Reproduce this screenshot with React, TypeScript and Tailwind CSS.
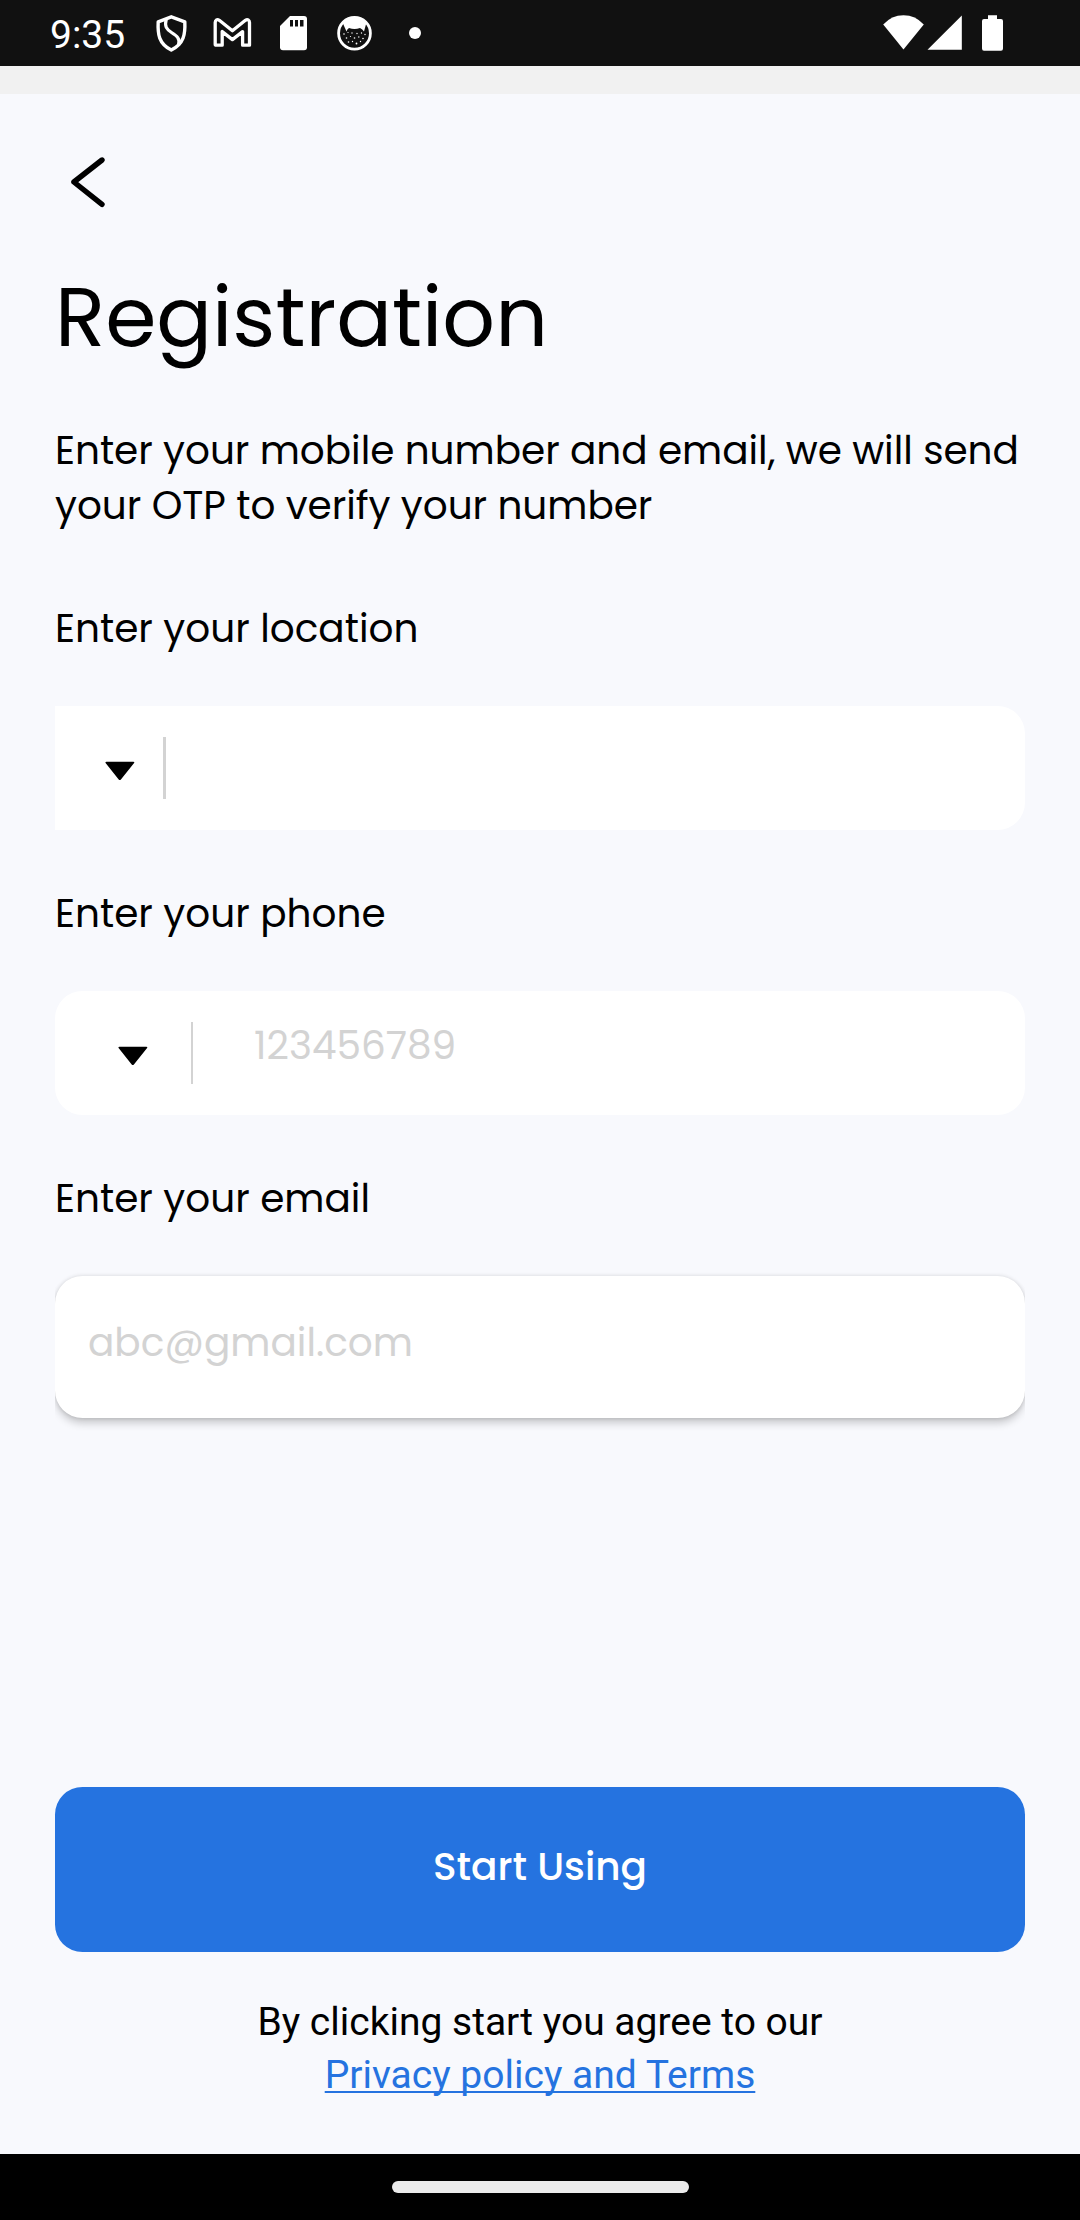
import type { ReactNode } from 'react';

const poppins = "font-['Poppins','Inter',sans-serif]";
const roboto = "font-['Roboto',sans-serif]";

function StatusIcon({ x, children }: { x: number; children: ReactNode }) {
  return (
    <svg className="h-[66px] w-[61px] shrink-0" viewBox={`${x} 0 61 66`} fill="none" stroke="none">
      {children}
    </svg>
  );
}

function StatusBar() {
  return (
    <header className="flex h-[66px] shrink-0 items-start bg-[#111111] text-white">
      <div className={`${roboto} ml-[50px] mt-3 w-[92px] text-[39px] leading-[46px]`}>9:35</div>
      <StatusIcon x={142}>
        <path
          d="M171.3 16.8 L184.8 21.8 C185.4 34 184 43.5 171.3 50 C158.6 43.5 157.6 34 158.2 21.8 Z"
          stroke="white"
          strokeWidth="3.4"
          strokeLinejoin="round"
        />
        <path
          d="M166.2 19.5 C164.4 26.5 166.5 29.3 171.5 32.5 C177 36 180.3 38.5 178.6 45"
          stroke="white"
          strokeWidth="3.2"
        />
      </StatusIcon>
      <StatusIcon x={203}>
        <path
          d="M215.2 44.2 V22.6 C215.2 19.8 217.2 18.8 219.3 20.3 L232.4 30.8 L245.4 20.3 C247.5 18.8 249.5 19.8 249.5 22.6 V45.2 H242.6 V31.6 L232.4 39.6 L222.2 31.6 V45.2 H216.4 Q215.2 45.2 215.2 44.2 Z"
          stroke="white"
          strokeWidth="3.3"
          strokeLinejoin="round"
        />
      </StatusIcon>
      <StatusIcon x={264}>
        <path
          d="M290 16 H304 Q307 16 307 19 V47.3 Q307 50.3 304 50.3 H283 Q280 50.3 280 47.3 V26 Z"
          fill="white"
        />
        <path d="M290 20h3v6.5h-3z M295 20h3v6.5h-3z M300 20h3.5v6.5h-3.5z" fill="#111" />
      </StatusIcon>
      <StatusIcon x={325}>
        <circle cx="354.5" cy="33.2" r="15.9" stroke="white" strokeWidth="2.8" />
        <path
          d="M342.5 22.5 Q348 16.8 354.5 16.8 Q361 16.8 366.5 22.5 L364 31.5 Q362.5 29 360 28 Q354.5 30 349 28 Q347 29 346.5 31.5 Z"
          fill="white"
        />
        <g fill="white">
          <circle cx="344" cy="34" r=".8" />
          <circle cx="348" cy="32.5" r=".6" />
          <circle cx="352" cy="33" r=".7" />
          <circle cx="357" cy="33.5" r=".7" />
          <circle cx="361.5" cy="33" r=".7" />
          <circle cx="365" cy="34.5" r=".7" />
          <circle cx="346.5" cy="38" r=".8" />
          <circle cx="350.5" cy="36.5" r=".6" />
          <circle cx="354.5" cy="38" r=".8" />
          <circle cx="358.8" cy="37" r=".7" />
          <circle cx="363" cy="38.5" r=".8" />
          <circle cx="348.5" cy="42" r=".8" />
          <circle cx="352.5" cy="41.5" r=".7" />
          <circle cx="356.5" cy="43.5" r=".9" />
          <circle cx="360.5" cy="41.5" r=".7" />
        </g>
      </StatusIcon>
      <StatusIcon x={386}>
        <circle cx="415" cy="33" r="6" fill="white" />
      </StatusIcon>
      <svg className="ml-auto mr-[70px] h-[66px] w-[130px]" viewBox="880 0 130 66" fill="white">
        <path d="M903.5 49.5 L883.2 24.5 Q891.5 15.2 903.5 15.2 Q915.5 15.2 923.8 24.5 Z" />
        <path d="M927.5 49.8 L961.8 15.5 V49.8 Z" />
        <path d="M988 15.2 H997 V19 H1001 Q1003 19 1003 21 V48.5 Q1003 50.7 1001 50.7 H984 Q982 50.7 982 48.5 V21 Q982 19 984 19 H988 Z" />
      </svg>
    </header>
  );
}

function Caret() {
  return (
    <svg className="mt-[5px] h-[20px] w-[30px] shrink-0" viewBox="0 0 30 20">
      <path d="M1.5 .8 H28.3 Q30 .8 28.9 2.2 L15.9 18.4 Q14.8 19.8 13.7 18.4 L.8 2.2 Q-.2 .8 1.5 .8 Z" fill="black" />
    </svg>
  );
}

function Field({ label, children }: { label: string; children: ReactNode }) {
  return (
    <div className="flex flex-col gap-[50px]">
      <label>{label}</label>
      {children}
    </div>
  );
}

export default function App() {
  return (
    <div className="flex h-[2220px] w-[1080px] flex-col overflow-hidden bg-[#f8f9fd] text-black">
      <StatusBar />
      <div className="h-7 shrink-0 bg-[#f1f1f1]" />

      <main className={`${poppins} flex flex-1 flex-col px-[55px] text-[39px] leading-[55px]`}>
        <div className="h-[165px] shrink-0 pl-4 pt-[62px]">
          <svg className="h-[52px] w-[36px]" viewBox="71 156 36 52" fill="none">
            <path
              d="M102 160 L73.9 182 L102 204.3"
              stroke="black"
              strokeWidth="5.4"
              strokeLinecap="round"
              strokeLinejoin="round"
            />
          </svg>
        </div>

        <h1 className="text-[82.5px] leading-[116px]">Registration</h1>
        <p className="mt-12 tracking-[-0.04px]">
          Enter your mobile number and email, we will send
          <br />
          your OTP to verify your number
        </p>

        <form className="mt-[68px] flex flex-col gap-14">
          <Field label="Enter your location">
            <div className="flex h-[124px] items-center rounded-r-[27.5px] bg-white pl-[50px]">
              <Caret />
              <div className="ml-[28px] h-[62px] w-[3px] bg-[#d3d3d3]" />
            </div>
          </Field>
          <Field label="Enter your phone">
            <div className="flex h-[124px] items-center rounded-[27.5px] bg-white pl-[63px]">
              <Caret />
              <div className="ml-[43px] h-[62px] w-[2px] bg-[#d3d3d3]" />
              <span className="mb-[15px] ml-[61px] text-[#d3d3d3]">123456789</span>
            </div>
          </Field>
          <Field label="Enter your email">
            <div className="overflow-x-clip">
              <div className="h-[142px] rounded-[27.5px] bg-white pl-[33px] pt-[39px] text-[#d3d3d3] shadow-[0_6px_9px_-1px_rgba(0,0,0,0.2),0_0px_4px_rgba(0,0,0,0.14)]">
                abc@gmail.com
              </div>
            </div>
          </Field>
        </form>

        <div className="mb-[52px] mt-auto">
          <button type="button" className="block h-[165px] w-full rounded-[27.5px] bg-[#2573e0] pb-[6px] font-medium text-white">
            Start Using
          </button>
          <div className={`${roboto} mt-[44px] text-center leading-[53px]`}>
            <p>By clicking start you agree to our</p>
            <a className="text-[#2573e0] underline decoration-2 underline-offset-[3px] [text-decoration-skip-ink:none]">
              Privacy policy and Terms
            </a>
          </div>
        </div>
      </main>

      <footer className="flex h-[66px] shrink-0 items-center justify-center bg-black">
        <div className="h-3 w-[297px] rounded-full bg-[#ebebeb]" />
      </footer>
    </div>
  );
}
